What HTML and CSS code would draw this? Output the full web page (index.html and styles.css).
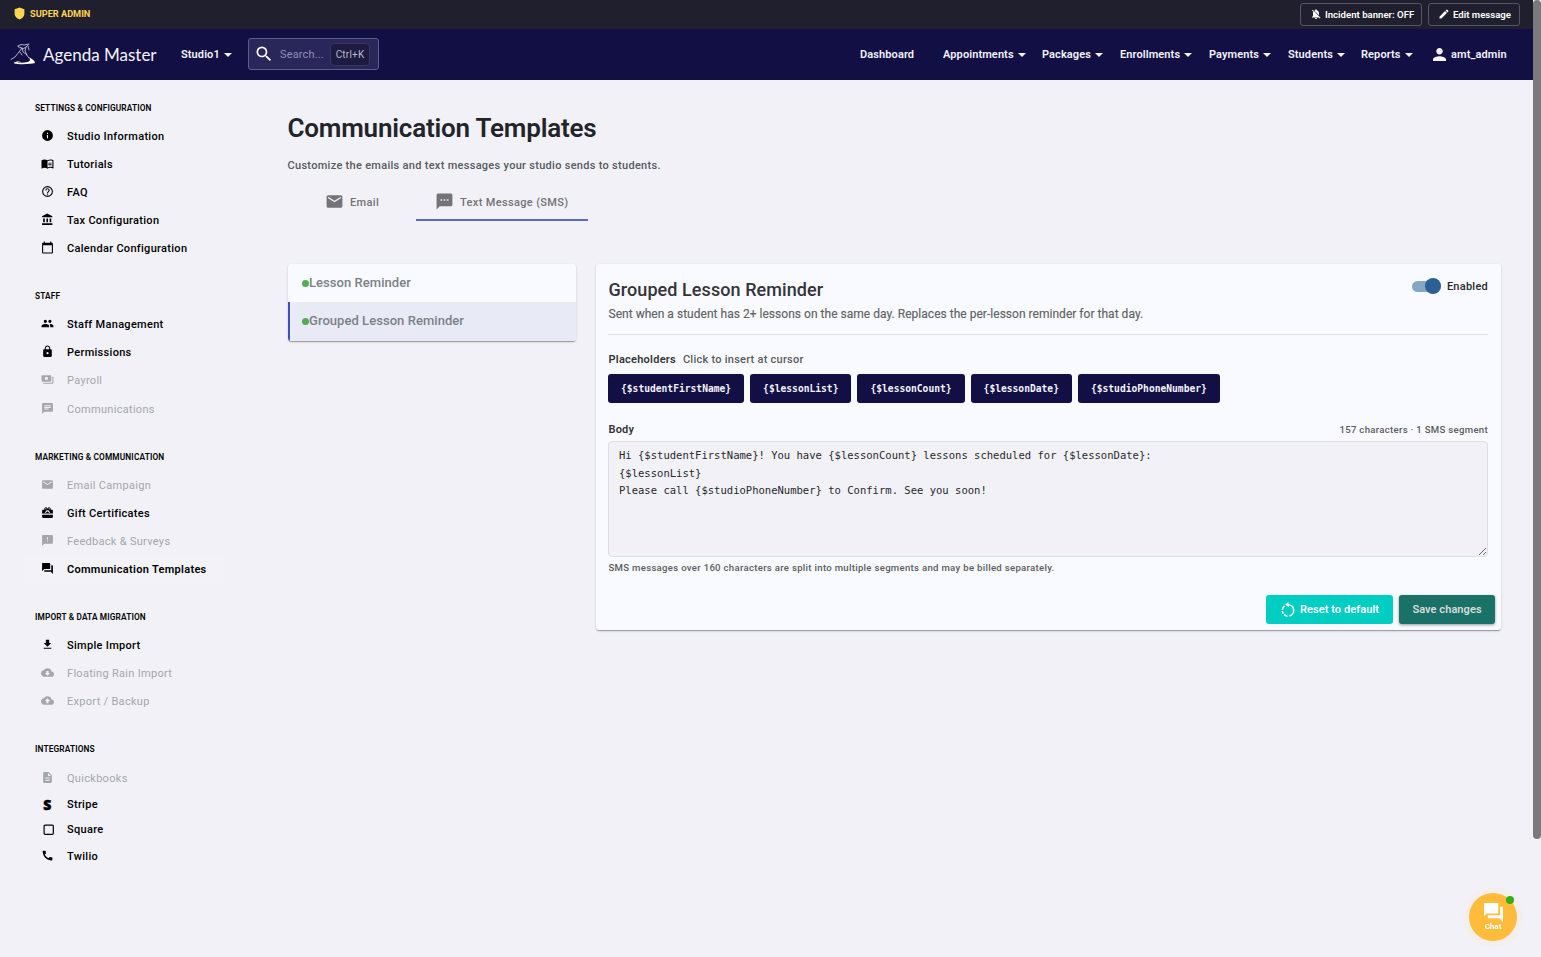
FILE: index.html
```html
<!DOCTYPE html>
<html lang="en">
<head>
<meta charset="utf-8">
<title>Communication Templates</title>
<link rel="stylesheet" href="styles.css">
</head>
<body>
<div class="page">
  <div class="admin-bar">
    <div class="admin-label">
      <svg class="shield" viewBox="0 0 24 24"><path d="M12 1 3 4v8c0 5.5 3.8 9.500 9 11 5.200-1.500 9-5.500 9-11V4z"/></svg>
      <span>SUPER ADMIN</span>
    </div>
    <div class="admin-actions">
      <button class="admin-btn incident"><svg viewBox="0 0 24 24"><path d="M20 18.690 7.840 6.140 5.270 3.490 4 4.760l2.800 2.800v.010c-.520.990-.800 2.160-.800 3.420v5l-2 2v1h13.730l2 2L21 19.720zM12 22c1.110 0 2-.890 2-2h-4c0 1.110.890 2 2 2m6-7.320V11c0-3.080-1.640-5.640-4.500-6.320V4c0-.830-.670-1.500-1.500-1.500s-1.500.670-1.500 1.500v.680c-.670.160-1.270.430-1.830.780z"/></svg><span>Incident banner: OFF</span></button>
      <button class="admin-btn edit"><svg viewBox="0 0 24 24"><path d="M3 17.250V21h3.750L17.810 9.940l-3.750-3.750zM20.710 7.040c.390-.390.390-1.020 0-1.410l-2.340-2.340a1 1 0 0 0-1.410 0l-1.830 1.830 3.750 3.750z"/></svg><span>Edit message</span></button>
    </div>
  </div>

  <header class="navbar">
    <svg class="logo" viewBox="0 0 26 22"><g fill="none" stroke="#d5d4e6" stroke-width=".8" stroke-linecap="round"><path d="M8 3 11 1.500 14 2 19 1M10 4l3 2 3-2 2-2M12 5 9 9l-4 5-4 2.500M12 5l1 4 3 2 3 4M16 4l-1 4 2 4M10 9l2 3M8 3l1.500 2M18 3l1 4"/></g><path fill="#fff" d="M19 14c1.500 1.500 5.500 2.500 6 6-4 1.200-17 1.800-21 .200-1-1 3-2 7-2-3 .6-4 1.200-2 1.400 4 .300 9 0 10.500-1.500 1-1.200.200-2.600-.500-4.100z"/></svg>
    <span class="brand">Agenda Master</span>
    <a class="studio">Studio1<i class="caret"></i></a>
    <div class="search">
      <svg viewBox="0 0 24 24"><path d="M15.500 14h-.790l-.280-.270A6.470 6.470 0 0 0 16 9.500 6.500 6.500 0 1 0 9.500 16c1.610 0 3.090-.590 4.230-1.570l.270.280v.790l5 4.990L20.490 19zm-6 0C7.010 14 5 11.990 5 9.500S7.010 5 9.500 5 14 7.010 14 9.500 11.990 14 9.500 14"/></svg>
      <span class="search-text">Search...</span>
      <kbd>Ctrl+K</kbd>
    </div>
    <nav class="menu">
      <a>Dashboard</a>
      <a>Appointments<i class="caret"></i></a>
      <a>Packages<i class="caret"></i></a>
      <a>Enrollments<i class="caret"></i></a>
      <a>Payments<i class="caret"></i></a>
      <a>Students<i class="caret"></i></a>
      <a>Reports<i class="caret"></i></a>
      <a class="user"><svg viewBox="4 4 16 16"><path d="M12 12c2.210 0 4-1.790 4-4s-1.790-4-4-4-4 1.790-4 4 1.790 4 4 4m0 2c-2.670 0-8 1.340-8 4v2h16v-2c0-2.660-5.330-4-8-4"/></svg><span>amt_admin</span></a>
    </nav>
  </header>

  <div class="content">
    <aside class="sidebar">
      <section class="group">
        <h2>SETTINGS &amp; CONFIGURATION</h2>
        <a class="item"><svg viewBox="0 0 24 24"><path d="M12 2a10 10 0 1 0 0 20 10 10 0 0 0 0-20m1 15h-2v-6h2zm0-8h-2V7h2z"/></svg><span>Studio Information</span></a>
        <a class="item"><svg viewBox="0 0 24 24"><path d="M21 5c-1.110-.350-2.330-.500-3.500-.500-1.950 0-4.050.400-5.500 1.500-1.450-1.100-3.550-1.500-5.500-1.500S2.450 4.900 1 6v14.650c0 .250.250.500.500.500.100 0 .150-.050.250-.050C3.100 20.450 5.050 20 6.500 20c1.950 0 4.050.400 5.500 1.500 1.350-.850 3.800-1.500 5.500-1.500 1.650 0 3.350.300 4.750 1.050.100.050.150.050.250.050.250 0 .500-.250.500-.500V6c-.600-.450-1.250-.750-2-1m0 13.500c-1.100-.350-2.300-.500-3.500-.500-1.700 0-4.150.650-5.500 1.500V8c1.350-.850 3.800-1.500 5.500-1.500 1.200 0 2.400.150 3.500.500zM13.500 10.500h6V12h-6zm0 3h6V15h-6z"/></svg><span>Tutorials</span></a>
        <a class="item"><svg viewBox="0 0 24 24"><path d="M11 18h2v-2h-2zm1-16a10 10 0 1 0 0 20 10 10 0 0 0 0-20m0 18c-4.410 0-8-3.590-8-8s3.590-8 8-8 8 3.590 8 8-3.590 8-8 8m0-14c-2.210 0-4 1.790-4 4h2c0-1.100.900-2 2-2s2 .900 2 2c0 2-3 1.750-3 5h2c0-2.250 3-2.500 3-5 0-2.210-1.790-4-4-4"/></svg><span>FAQ</span></a>
        <a class="item"><svg viewBox="0 0 24 24"><path d="M4 10v7h3v-7zm6 0v7h3v-7zM2 22h19v-3H2zm14-12v7h3v-7zM11.500 1 2 6v2h19V6z"/></svg><span>Tax Configuration</span></a>
        <a class="item"><svg viewBox="0 0 24 24"><path d="M20 3h-1V1h-2v2H7V1H5v2H4c-1.100 0-2 .900-2 2v16c0 1.100.900 2 2 2h16c1.100 0 2-.900 2-2V5c0-1.100-.900-2-2-2m0 18H4V8h16z"/></svg><span>Calendar Configuration</span></a>
      </section>
      <section class="group">
        <h2>STAFF</h2>
        <a class="item"><svg viewBox="0 0 24 24"><path d="M16.500 11a3 3 0 1 0 0-6 3 3 0 0 0 0 6M8 11a3 3 0 1 0 0-6 3 3 0 0 0 0 6m0 2c-2.330 0-7 1.170-7 3.500V19h14v-2.500C15 14.170 10.330 13 8 13m8.500 0c-.290 0-.620.020-.970.050 1.160.840 1.470 1.970 1.470 3.450V19h6v-2.500c0-2.330-4.170-3.500-6.500-3.500"/></svg><span>Staff Management</span></a>
        <a class="item"><svg viewBox="0 0 24 24"><path d="M18 8h-1V6c0-2.760-2.240-5-5-5S7 3.240 7 6v2H6c-1.100 0-2 .900-2 2v10c0 1.100.900 2 2 2h12c1.100 0 2-.900 2-2V10c0-1.100-.900-2-2-2m-6 9a2 2 0 1 1 0-4 2 2 0 0 1 0 4m3.100-9H8.900V6a3.100 3.100 0 0 1 6.200 0z"/></svg><span>Permissions</span></a>
        <a class="item off"><svg viewBox="0 0 24 24"><path d="M19 14V6c0-1.100-.900-2-2-2H3c-1.100 0-2 .900-2 2v8c0 1.100.900 2 2 2h14c1.100 0 2-.900 2-2m-9-1a3 3 0 1 1 0-6 3 3 0 0 1 0 6m13-6v11c0 1.100-.900 2-2 2H4v-2h17V7z"/></svg><span>Payroll</span></a>
        <a class="item off h29"><svg viewBox="0 0 24 24"><path d="M20 2H4c-1.100 0-2 .900-2 2v18l4-4h14c1.100 0 2-.900 2-2V4c0-1.100-.900-2-2-2M6 9h12v2H6zm8 5H6v-2h8zm4-6H6V6h12z"/></svg><span>Communications</span></a>
      </section>
      <section class="group">
        <h2>MARKETING &amp; COMMUNICATION</h2>
        <a class="item off"><svg viewBox="0 0 24 24"><path d="M20 4H4c-1.100 0-2 .900-2 2v12c0 1.100.900 2 2 2h16c1.100 0 2-.900 2-2V6c0-1.100-.900-2-2-2m0 4-8 5-8-5V6l8 5 8-5z"/></svg><span>Email Campaign</span></a>
        <a class="item"><svg viewBox="0 0 24 24"><path d="M20 7h-2.200C18.600 3.500 15.500 1.500 13.300 3L12 4.500 10.700 3C8.500 1.500 5.400 3.500 6.200 7H4c-1.500 0-2 1-2 2v5h20V9c0-1-.500-2-2-2M9 6.500A1.200 1.200 0 1 1 9 4a1.200 1.200 0 0 1 0 2.500m6 0A1.200 1.200 0 1 1 15 4a1.200 1.200 0 0 1 0 2.500M7 12l3.500-4h3L17 12l-1.600 1L12 9.500 8.600 13zM2 16v4c0 1.500 1 2 2 2h16c1 0 2-.500 2-2v-4z"/></svg><span>Gift Certificates</span></a>
        <a class="item off"><svg viewBox="0 0 24 24"><path d="M20 2H4c-1.100 0-2 .900-2 2v18l4-4h14c1.100 0 2-.900 2-2V4c0-1.100-.900-2-2-2m-7 12h-2v-2h2zm0-4h-2V6h2z"/></svg><span>Feedback &amp; Surveys</span></a>
        <a class="item active"><svg viewBox="0 0 24 24"><path d="M21 6h-2v9H6v2c0 .550.450 1 1 1h11l4 4V7c0-.550-.450-1-1-1m-4 6V3c0-.550-.450-1-1-1H3c-.550 0-1 .450-1 1v14l4-4h10c.550 0 1-.450 1-1"/></svg><span>Communication Templates</span></a>
      </section>
      <section class="group">
        <h2>IMPORT &amp; DATA MIGRATION</h2>
        <a class="item"><svg viewBox="0 0 24 24"><path d="M19 9h-4V3H9v6H5l7 7zM5 18v2h14v-2z"/></svg><span>Simple Import</span></a>
        <a class="item off"><svg viewBox="0 0 24 24"><path d="M19.350 10.040A7.490 7.490 0 0 0 12 4C9.110 4 6.600 5.640 5.350 8.040A5.994 5.994 0 0 0 0 14c0 3.310 2.690 6 6 6h13c2.760 0 5-2.240 5-5 0-2.640-2.050-4.780-4.650-4.960M17 13l-5 5-5-5h3V9h4v4z"/></svg><span>Floating Rain Import</span></a>
        <a class="item off"><svg viewBox="0 0 24 24"><path d="M19.350 10.040A7.490 7.490 0 0 0 12 4C9.110 4 6.600 5.640 5.350 8.040A5.994 5.994 0 0 0 0 14c0 3.310 2.690 6 6 6h13c2.760 0 5-2.240 5-5 0-2.640-2.050-4.780-4.650-4.960M14 13v4h-4v-4H7l5-5 5 5z"/></svg><span>Export / Backup</span></a>
      </section>
      <section class="group">
        <h2>INTEGRATIONS</h2>
        <a class="item off h29"><svg viewBox="0 0 24 24"><path d="M14 2H6c-1.100 0-2 .900-2 2v16c0 1.100.890 2 1.990 2H18c1.100 0 2-.900 2-2V8zm2 16H8v-2h8zm0-4H8v-2h8zm-3-5V3.500L18.500 9z"/></svg><span>Quickbooks</span></a>
        <a class="item h25"><b class="stripe-mark">S</b><span>Stripe</span></a>
        <a class="item h24"><svg class="square-mark" viewBox="0 0 13 13"><rect x="2.100" y="2.100" width="9.200" height="9.200" rx="1" fill="none" stroke="currentColor" stroke-width="1.200"/></svg><span>Square</span></a>
        <a class="item h29"><svg viewBox="0 0 24 24"><path d="M20.010 15.380c-1.230 0-2.420-.200-3.530-.560a.977.977 0 0 0-1.010.240l-1.570 1.970c-2.830-1.350-5.480-3.900-6.890-6.830l1.950-1.660c.270-.280.350-.670.240-1.020-.370-1.110-.560-2.300-.560-3.530 0-.540-.450-.990-.990-.990H4.190C3.650 3 3 3.240 3 3.990 3 13.280 10.730 21 20.010 21c.710 0 .990-.630.990-1.180v-3.450c0-.540-.450-.990-.990-.990"/></svg><span>Twilio</span></a>
      </section>
    </aside>

    <main class="main">
      <h1>Communication Templates</h1>
      <p class="lead">Customize the emails and text messages your studio sends to students.</p>
      <div class="tabs">
        <div class="tab email"><svg viewBox="0 0 24 24"><path d="M20 4H4c-1.100 0-2 .900-2 2v12c0 1.100.900 2 2 2h16c1.100 0 2-.900 2-2V6c0-1.100-.900-2-2-2m0 4-8 5-8-5V6l8 5 8-5z"/></svg><span>Email</span></div>
        <div class="tab sms"><svg viewBox="0 0 24 24"><path d="M20 2H4c-1.100 0-2 .900-2 2v18l4-4h14c1.100 0 2-.900 2-2V4c0-1.100-.900-2-2-2M9 11H7V9h2zm4 0h-2V9h2zm4 0h-2V9h2z"/></svg><span>Text Message (SMS)</span></div>
      </div>
      <div class="panels">
        <div class="list card">
          <div class="row"><i class="dot"></i><span>Lesson Reminder</span></div>
          <div class="row selected"><i class="dot"></i><span>Grouped Lesson Reminder</span></div>
        </div>
        <div class="editor card">
          <div class="editor-head">
            <div>
              <h3>Grouped Lesson Reminder</h3>
              <p class="desc">Sent when a student has 2+ lessons on the same day. Replaces the per-lesson reminder for that day.</p>
            </div>
            <div class="toggle"><span class="track"><i class="knob"></i></span><span>Enabled</span></div>
          </div>
          <div class="ph-label"><b>Placeholders</b><span>Click to insert at cursor</span></div>
          <div class="chips">
            <button class="chip">{$studentFirstName}</button>
            <button class="chip">{$lessonList}</button>
            <button class="chip">{$lessonCount}</button>
            <button class="chip">{$lessonDate}</button>
            <button class="chip">{$studioPhoneNumber}</button>
          </div>
          <div class="body-label"><b>Body</b><span>157 characters · 1 SMS segment</span></div>
          <textarea class="body-text" spellcheck="false">Hi {$studentFirstName}! You have {$lessonCount} lessons scheduled for {$lessonDate}:
{$lessonList}
Please call {$studioPhoneNumber} to Confirm. See you soon!</textarea>
          <p class="hint">SMS messages over 160 characters are split into multiple segments and may be billed separately.</p>
          <div class="actions">
            <button class="btn reset"><svg viewBox="0 0 16 16"><path d="M8.500 0v5L5 2.500z"/><path fill="none" stroke="currentColor" stroke-width="1.600" d="M8 2.700A5.700 5.700 0 0 1 9.500 13.900M7.500 14.100A5.700 5.700 0 0 1 4.300 12.700M3.300 11.600A5.700 5.700 0 0 1 2.300 9M2.300 7.600A5.700 5.700 0 0 1 4.600 3.800"/></svg><span>Reset to default</span></button>
            <button class="btn save">Save changes</button>
          </div>
        </div>
      </div>
    </main>
  </div>
</div>
<div class="scrollbar"></div>
<div class="chat">
  <svg viewBox="2 2 20 20" preserveAspectRatio="none"><path d="M2 2h15v11H5l-3 3zM19 6h3v16l-4-4H6v-3h13z"/></svg>
  <span>Chat</span>
  <i class="online"></i>
</div>
</body>
</html>
```
FILE: styles.css
```css
* { box-sizing: border-box; }
html, body { margin: 0; height: 100%; overflow: hidden; }
body { background: #f2f1f7; font-family: Roboto, "Liberation Sans", sans-serif; font-weight: 500; font-size: 11px; color: #000; }
svg { display: block; fill: currentColor; flex: none; }
h1, h2, h3, p { margin: 0; }
button { font-family: inherit; border: 0; padding: 0; margin: 0; display: flex; align-items: center; }
.page { width: 1533px; height: 957px; display: flex; flex-direction: column; }

.admin-bar { height: 29px; background: #1f1f2e; display: flex; justify-content: space-between; align-items: center; padding: 0 13px; }
.admin-label { display: flex; align-items: center; gap: 4px; color: #ffd54f; font-size: 9.200px; font-weight: 700; height: 27px; margin-bottom: 2px; }
.shield { width: 13px; height: 13px; }
.admin-actions { display: flex; gap: 6px; margin-bottom: 1px; }
.admin-btn { height: 23px; border: 1px solid #55556a; border-radius: 3px; background: none; color: #fff; font-size: 9.600px; font-weight: 600; gap: 3px; padding-left: 9px; white-space: nowrap; }
.admin-btn svg { width: 12px; height: 12px; }
.incident { width: 122px; }
.edit { width: 92px; }

.navbar { height: 51px; background: #120f45; color: #f4f4fa; display: flex; align-items: center; padding: 0 0 1px 10px; }
.logo { width: 26px; height: 22px; }
.brand { font-family: Lato, sans-serif; font-weight: 400; font-size: 17px; margin-left: 7px; width: 138px; white-space: nowrap; }
.studio, .menu a { display: flex; align-items: center; gap: 4px; font-size: 11px; font-weight: 600; letter-spacing: .1px; padding-top: 1px; }
.studio { width: 67px; }
.caret { border: 4px solid transparent; border-top-color: currentColor; border-bottom: 0; }
.search { width: 131px; height: 32px; border: 1px solid #5f5d87; border-radius: 3px; background: #29265a; display: flex; align-items: center; padding-left: 5px; }
.search svg { width: 20px; height: 20px; color: #fff; }
.search-text { margin-left: 6px; color: #9390b0; font-size: 11px; font-weight: 400; letter-spacing: .15px; width: 50px; }
kbd { font: 400 10px Roboto, sans-serif; letter-spacing: .2px; color: #bbbacb; background: #1d1b40; border: 1px solid #393760; border-radius: 4px; width: 40px; height: 23px; display: flex; align-items: center; justify-content: center; }
.menu { margin-left: auto; display: grid; grid-template-columns: 83px 99px 78px 89px 79px 73px 72px 100px; white-space: nowrap; }
.user svg { width: 13px; height: 13px; }
.menu .user { gap: 5px; }

.content { display: flex; flex: 1; }
.sidebar { width: 287.500px; padding: 13px 0 0 23px; display: flex; flex-direction: column; gap: 19px; }
.group h2 { height: 29px; line-height: 29px; padding: 1px 0 0 12px; font-size: 8.300px; font-weight: 600; letter-spacing: .15px; white-space: nowrap; }
.item { display: flex; align-items: center; height: 28px; width: 201px; padding-left: 18px; gap: 13px; font-size: 11px; letter-spacing: .3px; white-space: nowrap; }
.item svg { width: 13px; height: 13px; margin-bottom: 2px; }
.off { color: #a3a7ad; font-weight: 400; }
.active { font-weight: 600; background: #f3f2f8; }
.h29 { height: 29px; padding-top: 1px; }
.h25 { height: 25px; }
.h24 { height: 24px; }
.item .square-mark { margin: 0 -1px 0 1px; }
.stripe-mark { width: 13px; text-align: center; font: 800 14px "Open Sans", sans-serif; line-height: 14px; -webkit-text-stroke: .5px #000; }

.main { padding-top: 32px; width: 1213.500px; }
h1 { height: 32px; line-height: 32px; font-size: 26px; font-weight: 600; letter-spacing: -.2px; color: #212529; }
.lead { margin-top: 14px; height: 16px; line-height: 16px; font-size: 11px; letter-spacing: .29px; color: #555a5f; }
.tabs { display: flex; height: 38px; margin: 9px 0 0 .5px; color: #737378; letter-spacing: .35px; }
.tab { display: flex; align-items: center; }
.tab svg { width: 19px; height: 19px; margin: 0 6px 2px 1px; }
.email { width: 128px; padding-left: 36px; }
.sms { width: 172px; padding-left: 18px; border-bottom: 2px solid #5c6bc0; padding-top: 2px; }
.panels { display: flex; align-items: flex-start; gap: 20px; margin: 43px 0 0 .5px; }
.card { background: #f9faff; border-radius: 3px; box-shadow: 0 2px 1px -1px rgba(0,0,0,.2), 0 1px 1px rgba(0,0,0,.14), 0 1px 3px rgba(0,0,0,.12); }
.list { width: 288px; overflow: hidden; }
.row { height: 38px; display: flex; align-items: center; padding-left: 14px; font-size: 13px; letter-spacing: .05px; color: #7b8285; }
.row span { margin-bottom: 2px; }
.selected { height: 39px; background: #e8eaf6; border-left: 2px solid #3f51b5; padding-left: 12px; }
.dot { width: 7px; height: 7px; border-radius: 50%; background: #4caf50; }
.editor { width: 905px; height: 366px; padding: 14px 13px 0 12px; }
.editor-head { height: 57px; border-bottom: 1px solid #e0e1e6; display: flex; justify-content: space-between; }
h3 { font-size: 18px; line-height: 24px; font-weight: 500; letter-spacing: .07px; color: #333437; padding-left: .5px; }
.desc { font-size: 12px; line-height: 16px; margin-top: 4px; font-weight: 400; letter-spacing: .025px; color: #606266; padding-left: .5px; -webkit-text-stroke: .15px #606266; }
.toggle { display: flex; align-items: center; height: 17px; gap: 6px; color: #28292c; letter-spacing: .25px; }
.track { width: 29px; height: 11px; border-radius: 6px; background: #87a6c5; display: flex; justify-content: flex-end; align-items: center; margin-bottom: 1px; }
.knob { width: 16px; height: 16px; border-radius: 50%; background: #2a6093; flex: none; }
.ph-label { display: flex; gap: 7px; height: 16px; line-height: 16px; margin-top: 17px; padding-left: .5px; letter-spacing: .25px; color: #5a5c60; }
.ph-label b, .body-label b { color: #333437; font-weight: 600; font-size: 11px; }
.chips { display: flex; gap: 6px; margin-top: 6px; }
.chip { height: 29px; padding: 0 13px; border-radius: 3px; background: #120f45; color: #f3f3fb; font: 700 9.640px "DejaVu Sans Mono", monospace; }
.body-label { display: flex; justify-content: space-between; height: 16px; line-height: 16px; margin-top: 19px; padding-left: .5px; letter-spacing: .2px; }
.body-label span { font-size: 9.600px; letter-spacing: .3px; color: #5a5c60; }
.body-text { display: block; width: 880px; height: 116px; margin: 3px 0 0; padding: 5px 10px; border: 1px solid #dddde3; border-radius: 4px; background: #f2f1f7; color: #27292d; font: 400 10.540px/17.500px "DejaVu Sans Mono", monospace; resize: vertical; outline: 0; overflow: hidden; }
.hint { font-size: 9.600px; height: 16px; line-height: 16px; margin-top: 3px; padding-left: .5px; letter-spacing: .295px; color: #5a5c60; }
.actions { display: flex; justify-content: flex-end; gap: 6px; margin: 19px -7px 0 0; }
.btn { height: 29px; border-radius: 3px; justify-content: center; color: #fff; font-size: 11px; font-weight: 600; letter-spacing: .07px; }
.btn svg { width: 16px; height: 16px; margin-right: 4px; }
.reset { width: 127px; background: #00cec3; }
.save { width: 96px; background: #1a7168; color: #d5dddc; box-shadow: 0 1px 3px rgba(0,0,0,.4); }

.scrollbar { position: fixed; right: 0; top: 0; width: 8px; height: 839px; border-radius: 4px; background: #7a7a7d; }
.chat { position: fixed; left: 1469px; top: 893px; width: 48px; height: 48px; border-radius: 50%; background: #ffbc3b; box-shadow: 0 0 0 6px #f4efee; color: #fff; display: flex; flex-direction: column; align-items: center; padding-top: 10px; font-size: 8px; line-height: 9px; font-weight: 800; }
.chat svg { width: 19px; height: 19px; }
.online { position: absolute; right: 3px; top: 3px; width: 8px; height: 8px; border-radius: 50%; background: #35ad17; }
```
